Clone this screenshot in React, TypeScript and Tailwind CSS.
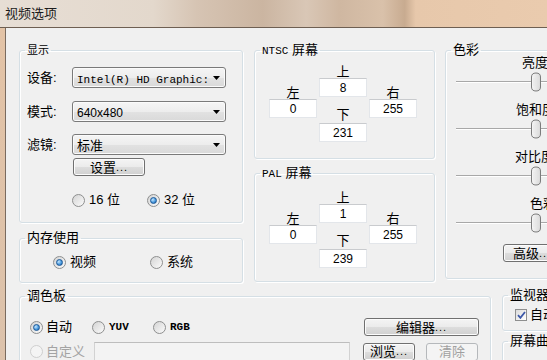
import React from "react";

function Radio({ checked, disabled }: { checked?: boolean; disabled?: boolean }) {
  return (
    <span
      className={`flex h-[13px] w-[13px] shrink-0 items-center justify-center rounded-full border ${
        disabled
          ? "border-[#cfcfcf] bg-[#f4f4f4]"
          : "border-[#8e8f8f] bg-[linear-gradient(135deg,#d4d4d4,#fbfbfb)]"
      }`}
    >
      {checked && (
        <span className="h-[7px] w-[7px] rounded-full border border-[#1c5897] bg-[radial-gradient(circle_at_35%_35%,#c6e6fc,#4a9be0_55%,#1f5f9e)]" />
      )}
    </span>
  );
}

function Group({
  title,
  className,
  children,
}: {
  title: React.ReactNode;
  className: string;
  children?: React.ReactNode;
}) {
  return (
    <fieldset
      className={`min-w-0 shrink-0 rounded-[3px] border border-[#d5dfe5] shadow-[inset_1px_1px_0_#ffffff,1px_1px_0_#ffffff] ${className}`}
    >
      <legend className="ml-[5px] whitespace-nowrap px-[2px] text-[13px] leading-[16px]">{title}</legend>
      {children}
    </fieldset>
  );
}

function Combo({ children }: { children: React.ReactNode }) {
  return (
    <div className="flex h-[21px] w-[154px] items-center rounded-[3px] border border-[#7a7a7a] bg-[linear-gradient(180deg,#f5f5f5_0%,#ededed_50%,#e2e2e2_51%,#d9d9d9_100%)] pl-[4px] pr-[5px] shadow-[inset_0_0_0_1px_#fbfbfb]">
      <div className="flex-1 overflow-hidden whitespace-nowrap">{children}</div>
      <svg width="7" height="4" viewBox="0 0 7 4">
        <path d="M0 0h7L3.5 4z" fill="#000" />
      </svg>
    </div>
  );
}

function Button({
  children,
  className,
  disabled,
}: {
  children: React.ReactNode;
  className: string;
  disabled?: boolean;
}) {
  return (
    <div
      className={`flex h-[18px] shrink-0 items-center justify-center whitespace-nowrap rounded-[3px] border text-[13px] leading-none ${
        disabled
          ? "border-[#b5b8bb] bg-[#f4f4f4] text-[#a0a0a0]"
          : "border-[#707070] bg-[linear-gradient(180deg,#f4f4f4_0%,#ebebeb_50%,#dddddd_51%,#d0d0d0_100%)] shadow-[inset_0_0_0_1px_#fcfcfc]"
      } ${className}`}
    >
      {children}
    </div>
  );
}

function Field({ value }: { value: string }) {
  return (
    <div className="flex h-[19px] w-[48px] items-center justify-center border border-[#e3e6ea] border-t-[#c9cbce] bg-white text-[12px] leading-none">
      {value}
    </div>
  );
}

function Margins({ top, left, right, bottom }: { top: string; left: string; right: string; bottom: string }) {
  return (
    <div className="flex gap-[2px] pl-[14px]">
      <div className="mt-[21px] flex flex-col items-center">
        <span className="text-[13px] leading-[13px]">左</span>
        <Field value={left} />
      </div>
      <div className="flex flex-col items-center">
        <span className="text-[13px] leading-[13px]">上</span>
        <Field value={top} />
        <span className="mt-[11px] text-[13px] leading-[13px]">下</span>
        <div className="mt-[2px]">
          <Field value={bottom} />
        </div>
      </div>
      <div className="mt-[21px] flex flex-col items-center">
        <span className="text-[13px] leading-[13px]">右</span>
        <Field value={right} />
      </div>
    </div>
  );
}

function Slider({ label, indent }: { label: string; indent: string }) {
  return (
    <div className="mb-[11px] first:-mt-[2px]">
      <div className={`whitespace-nowrap text-[13px] leading-[13px] ${indent}`}>{label}</div>
      <div className="relative mt-[3px] h-[20px]">
        <div className="pt-[9px]">
          <div className="h-[2px] border-t border-b border-t-[#a8a8a8] border-b-[#ffffff]" />
        </div>
        <svg className="absolute left-[74px] top-0" width="12" height="20" viewBox="0 0 12 20">
          <defs>
            <linearGradient id="thumb" x1="0" y1="0" x2="1" y2="0">
              <stop offset="0" stopColor="#f7f7f7" />
              <stop offset="1" stopColor="#d8d8d8" />
            </linearGradient>
          </defs>
          <path
            d="M1.5 5Q1.5 1 6 1Q10.5 1 10.5 5L10.5 15Q10.5 19 6 19Q1.5 19 1.5 15Z"
            fill="url(#thumb)"
            stroke="#7c7c7c"
          />
          <path d="M4 6v8M6 6v8M8 6v8" stroke="#e6e6e6" strokeWidth="0.6" />
        </svg>
      </div>
    </div>
  );
}

export default function App() {
  return (
    <div className="h-[360px] w-[547px] overflow-hidden bg-[#f0f0f0] font-['Liberation_Sans','Noto_Sans_CJK_SC',sans-serif] text-black">
      {/* title bar */}
      <div className="flex h-[28px] items-center border-b border-[#6e5f52] bg-[linear-gradient(90deg,#e7ded5_0%,#e3d8cc_28%,#d6c4b3_36%,#cbb5a1_48%,#d9c7b6_56%,#cfb7a1_62%,#d9c1aa_70%,#c8ab90_74%,#e7c8ab_76%,#eacbae_100%)] pl-[5px]">
        <span className="text-[13px] leading-none text-[#1b1b1b]">视频选项</span>
      </div>

      <div className="flex h-[332px]">
        <div className="w-[5px] shrink-0 bg-[linear-gradient(180deg,#e3c3a6,#dcc2ab)]" />
        <div className="flex-1 border-l border-[#7a6b5f] pl-[13px] pt-[14px]">
          {/* top row */}
          <div className="flex h-[241px] items-start">
            <div className="flex w-[224px] shrink-0 flex-col">
              <Group title={<span className="text-[11px]">显示</span>} className="h-[181px] w-[224px]">
                <div className="pl-[7px] pt-[9px]">
                  <div className="flex items-center">
                    <span className="w-[45px] text-[13px]">设备:</span>
                    <Combo>
                      <span className="font-['Liberation_Mono',monospace] text-[11px]">Intel(R) HD Graphic:</span>
                    </Combo>
                  </div>
                  <div className="mt-[13px] flex items-center">
                    <span className="w-[45px] text-[13px]">模式:</span>
                    <Combo>
                      <span className="text-[12px]">640x480</span>
                    </Combo>
                  </div>
                  <div className="mt-[12px] flex items-center">
                    <span className="w-[45px] text-[13px]">滤镜:</span>
                    <Combo>
                      <span className="text-[13px]">标准</span>
                    </Combo>
                  </div>
                  <Button className="ml-[46px] mt-[3px] w-[72px]">
                    设置<span className="text-[11px] tracking-[1px]">...</span>
                  </Button>
                  <div className="ml-[45px] mt-[17px] flex h-[14px] items-center text-[13px]">
                    <div className="flex w-[75px] items-center gap-[4px]">
                      <Radio />
                      <span>16 位</span>
                    </div>
                    <div className="flex items-center gap-[4px]">
                      <Radio checked />
                      <span>32 位</span>
                    </div>
                  </div>
                </div>
              </Group>
              <Group title="内存使用" className="mt-[7px] h-[53px] w-[224px]">
                <div className="ml-[33px] mt-[9px] flex h-[14px] items-center text-[13px]">
                  <div className="flex w-[97px] items-center gap-[4px]">
                    <Radio checked />
                    <span>视频</span>
                  </div>
                  <div className="flex items-center gap-[4px]">
                    <Radio />
                    <span>系统</span>
                  </div>
                </div>
              </Group>
            </div>

            <div className="ml-[11px] flex w-[181px] shrink-0 flex-col">
              <Group
                title={
                  <>
                    <span className="font-['Liberation_Mono',monospace] text-[11px]">NTSC</span> 屏幕
                  </>
                }
                className="h-[117px] w-[181px]"
              >
                <div className="mt-[6px]">
                  <Margins top="8" left="0" right="255" bottom="231" />
                </div>
              </Group>
              <Group
                title={
                  <>
                    <span className="font-['Liberation_Mono',monospace] text-[11px]">PAL</span> 屏幕
                  </>
                }
                className="mt-[6px] h-[117px] w-[181px]"
              >
                <div className="mt-[9px]">
                  <Margins top="1" left="0" right="255" bottom="239" />
                </div>
              </Group>
            </div>

            <Group title="色彩" className="ml-[10px] h-[237px] w-[130px]">
              <div className="pl-[10px]">
                <Slider label="亮度" indent="pl-[66px]" />
                <Slider label="饱和度" indent="pl-[60px]" />
                <Slider label="对比度" indent="pl-[59px]" />
                <Slider label="色彩" indent="pl-[74px]" />
                <Button className="ml-[47px] mt-[9px] w-[80px] justify-start pl-[9px]">
                  高级<span className="text-[11px] tracking-[1px]">...</span>
                </Button>
              </div>
            </Group>
          </div>

          {/* bottom row */}
          <div className="mt-[5px] flex items-start">
            <Group title="调色板" className="h-[90px] w-[472px]">
              <div className="mt-[14px] flex h-[18px] items-center pl-[10px] pr-[11px] text-[13px]">
                <div className="flex w-[62px] items-center gap-[3px]">
                  <Radio checked />
                  <span>自动</span>
                </div>
                <div className="flex w-[61px] items-center gap-[4px]">
                  <Radio />
                  <span className="font-['Liberation_Mono',monospace] text-[11px] font-bold">YUV</span>
                </div>
                <div className="flex items-center gap-[4px]">
                  <Radio />
                  <span className="font-['Liberation_Mono',monospace] text-[11px] font-bold">RGB</span>
                </div>
                <Button className="ml-auto w-[115px]">
                  编辑器<span className="text-[11px] tracking-[1px]">...</span>
                </Button>
              </div>
              <div className="mt-[6px] flex h-[19px] items-center pl-[10px] text-[13px]">
                <div className="flex w-[64px] items-center gap-[3px]">
                  <Radio disabled />
                  <span className="text-[#a3a3a3]">自定义</span>
                </div>
                <div className="h-[19px] w-[256px] border border-[#d2d2d2] border-t-[#bdbdbd] bg-[#f3f3f3]" />
                <Button className="ml-[13px] w-[52px]">
                  浏览<span className="text-[11px] tracking-[1px]">...</span>
                </Button>
                <Button disabled className="ml-[11px] w-[52px]">
                  清除
                </Button>
              </div>
            </Group>

            <div className="-mt-[1px] ml-[11px] flex w-[80px] shrink-0 flex-col">
              <Group title="监视器" className="h-[44px] w-[80px]">
                <div className="mt-[2px] flex items-center gap-[3px] pl-[12px] text-[13px]">
                  <span className="flex h-[12px] w-[12px] items-center justify-center border border-[#8e8f8f] bg-[linear-gradient(135deg,#dcdcdc,#ffffff)]">
                    <svg width="9" height="8" viewBox="0 0 9 8">
                      <path d="M1 4.2L3.4 6.8L8 1" fill="none" stroke="#3b57a8" strokeWidth="1.8" />
                    </svg>
                  </span>
                  <span>自动</span>
                </div>
              </Group>
              <Group title="屏幕曲线" className="mt-[2px] h-[40px] w-[80px]" />
            </div>
          </div>
        </div>
      </div>
    </div>
  );
}
